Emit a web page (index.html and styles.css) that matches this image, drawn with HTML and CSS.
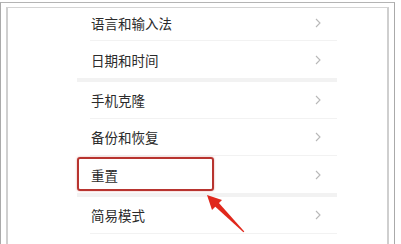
FILE: index.html
```html
<!DOCTYPE html>
<html lang="zh-CN">
<head>
    <meta charset="UTF-8">
    <title>设置</title>
    <link rel="stylesheet" href="styles.css">
</head>
<body>
    <div class="frame">
        <div class="panel">
            <div class="list">
                <div class="row row-first">
                    <div class="row-body"><span>语言和输入法</span><svg class="chev" viewBox="0 0 6 10"><polyline points="1,1 5,5 1,9"/></svg></div>
                </div>
                <div class="row">
                    <div class="row-body no-line"><span>日期和时间</span><svg class="chev" viewBox="0 0 6 10"><polyline points="1,1 5,5 1,9"/></svg></div>
                </div>
                <div class="band"></div>
                <div class="row">
                    <div class="row-body"><span>手机克隆</span><svg class="chev" viewBox="0 0 6 10"><polyline points="1,1 5,5 1,9"/></svg></div>
                </div>
                <div class="row">
                    <div class="row-body"><span>备份和恢复</span><svg class="chev" viewBox="0 0 6 10"><polyline points="1,1 5,5 1,9"/></svg></div>
                </div>
                <div class="row">
                    <div class="row-body no-line"><span>重置</span><svg class="chev" viewBox="0 0 6 10"><polyline points="1,1 5,5 1,9"/></svg></div>
                    <div class="highlight"></div>
                </div>
                <div class="band"></div>
                <div class="row">
                    <div class="row-body"><span>简易模式</span><svg class="chev" viewBox="0 0 6 10"><polyline points="1,1 5,5 1,9"/></svg></div>
                </div>

                <!-- red arrow pointing at the reset row -->
                <svg class="arrow" viewBox="0 0 50 45">
                    <polygon points="18,10 44.3,39.4 43.4,40.3 14.5,14"/>
                    <polygon points="7,3 22,8 12,18"/>
                </svg>
            </div>
        </div>
    </div>
</body>
</html>
```

FILE: styles.css
```css
body {
    margin: 0;
    width: 401px;
    height: 244px;
    overflow: hidden;
    background: #fff;
    font-family: "Noto Sans CJK SC", "Noto Sans", sans-serif;
}
.frame {
    margin-top: 2px;
    width: 395px;
    height: 242px;
    box-sizing: border-box;
    border-left: 1px solid #aaa;
    border-top: 1px solid #b4b4b4;
    border-right: 1px solid #aaa;
    padding: 4px 5px 0 5px;
}
.panel {
    height: 100%;
    box-sizing: border-box;
    border-left: 2px solid #cfcfcf;
    border-top: 1px solid #d4d4d4;
    border-right: 2px solid #cfcfcf;
}
.list {
    position: relative;
    margin-left: 69px;
    width: 260px;
}
.row {
    position: relative;
    height: 37px;
    padding-left: 13px;
}
.row-first {
    height: 33px;
}
.row-body {
    height: 100%;
    box-sizing: border-box;
    display: flex;
    align-items: center;
    justify-content: space-between;
    padding: 0 16px 0 1px;
    border-bottom: 1px solid #f2f2f2;
    font-size: 13.5px;
    color: #2b2b2b;
}
.row-first .row-body {
    padding-bottom: 2px;
}
.row-body.no-line {
    border-bottom: none;
}
.chev {
    width: 6px;
    height: 10px;
}
.chev polyline {
    fill: none;
    stroke: #b8b8b8;
    stroke-width: 1.1;
}
.band {
    height: 4px;
    background: #f2f2f2;
}
.highlight {
    position: absolute;
    left: 0;
    top: 1px;
    width: 137px;
    height: 34px;
    box-sizing: border-box;
    border: 2px solid #b8342f;
    border-radius: 3px;
    box-shadow: 0 0 2px rgba(200, 60, 50, 0.5);
}
.arrow {
    position: absolute;
    left: 123px;
    top: 184px;
    width: 50px;
    height: 45px;
}
.arrow polygon {
    fill: #e0281c;
}
```
